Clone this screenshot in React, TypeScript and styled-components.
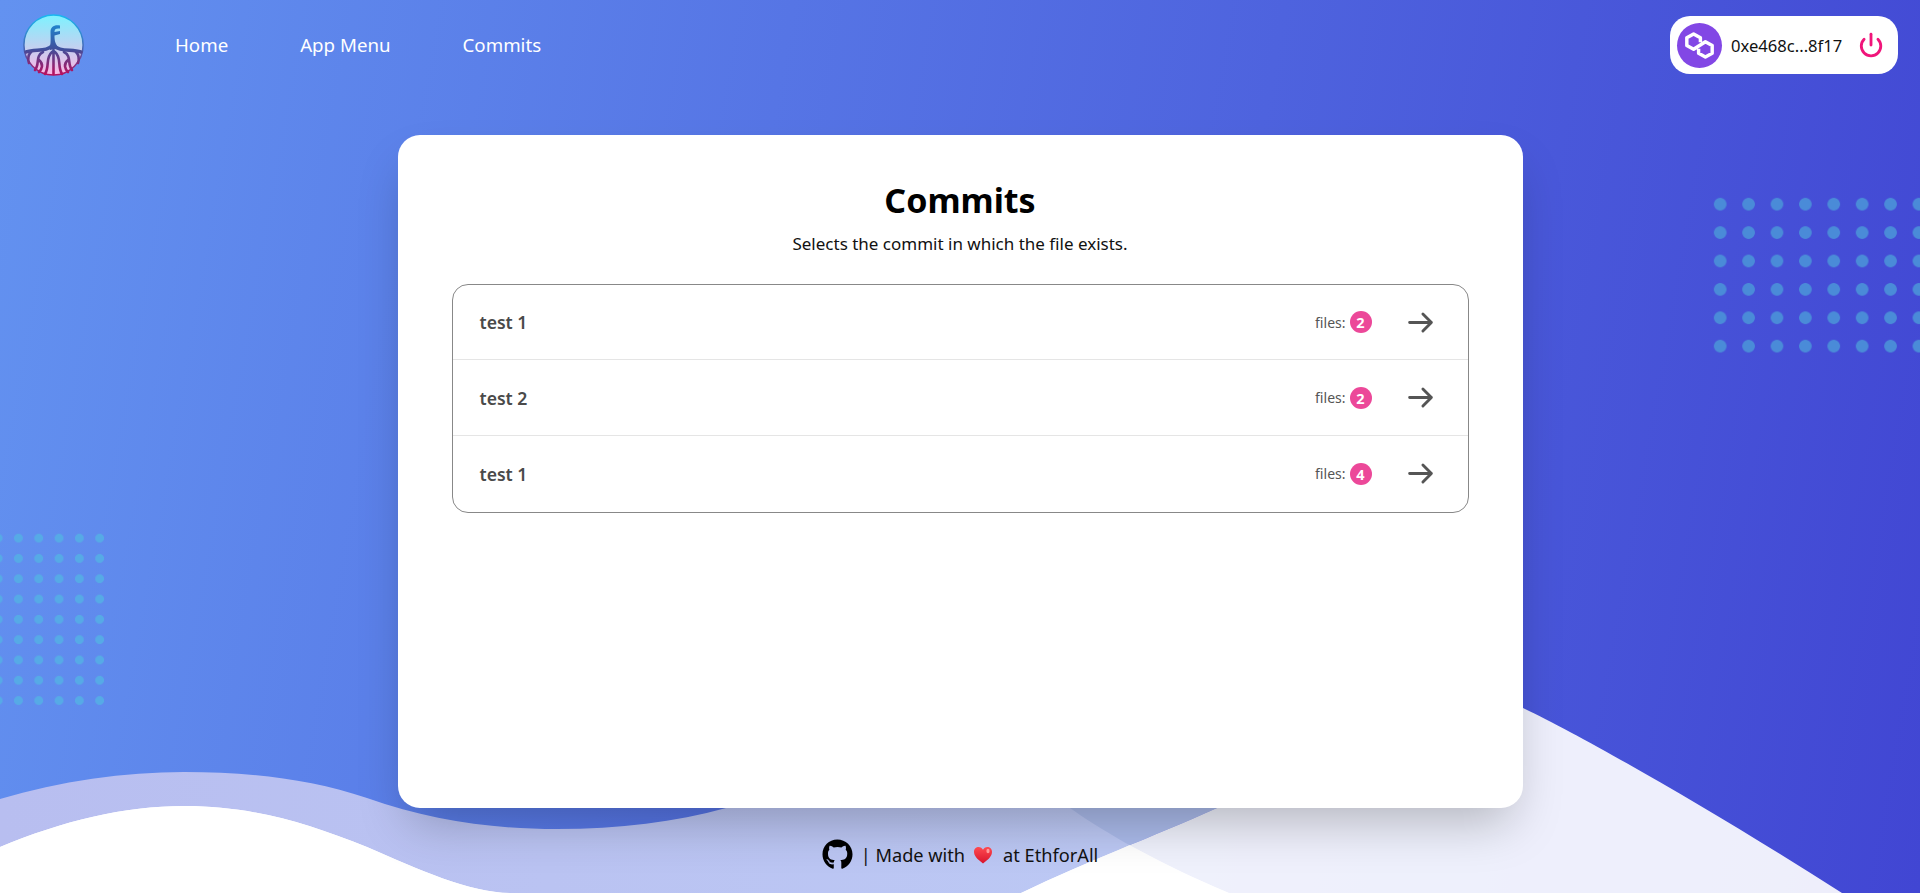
import React from 'react';
import styled, { createGlobalStyle } from 'styled-components';
import { Power } from 'lucide-react';
import { FaGithub } from 'react-icons/fa';

const GlobalStyle = createGlobalStyle`
  html, body {
    margin: 0;
    padding: 0;
    font-family: "Noto Sans", "Open Sans", sans-serif;
  }
  * { box-sizing: border-box; }
`;

const Page = styled.div`
  position: relative;
  height: 893px;
  overflow: hidden;
  display: flex;
  flex-direction: column;
  background: linear-gradient(100deg, #6392f0 0%, #4146d3 100%);
`;

const Waves = styled.svg`
  position: absolute;
  inset: 0;
  width: 100%;
  height: 100%;
`;

const Dots = styled.div<{ $step: number; $dot: number; $color: string; $side: 'left' | 'right' }>`
  position: absolute;
  background-image: radial-gradient(circle, ${(p) => p.$color} ${(p) => p.$dot / 2 - 0.5}px, transparent ${(p) => p.$dot / 2 + 0.3}px);
  background-size: ${(p) => p.$step}px ${(p) => p.$step}px;
  ${(p) =>
    p.$side === 'right'
      ? 'top: 189.5px; left: 1705.5px; width: 215px; height: 170.4px;'
      : 'top: 527.8px; left: -12.2px; width: 121.8px; height: 182.7px;'}
`;

const Nav = styled.nav`
  position: relative;
  height: 90px;
  flex-shrink: 0;
  padding: 14px 22px 0 23px;
  display: flex;
  align-items: flex-start;
`;

const Logo = styled.svg`
  width: 61px;
  height: 62px;
  flex-shrink: 0;
`;

const NavLinks = styled.div`
  display: flex;
  gap: 72px;
  margin-left: 91px;
  margin-top: 17px;
`;

const NavLink = styled.a`
  color: #fff;
  font-size: 18.7px;
  line-height: 28px;
`;

const Wallet = styled.div`
  margin-left: auto;
  margin-top: 2px;
  width: 228px;
  height: 58px;
  background: #fff;
  border-radius: 20px;
  display: flex;
  align-items: center;
  padding: 0 14px 0 7px;
  color: #111;
  font-size: 16.6px;
`;

const ChainBadge = styled.div`
  width: 45px;
  height: 45px;
  border-radius: 50%;
  background: #8247e5;
  flex-shrink: 0;
  margin-right: 9px;
  display: flex;
  align-items: center;
  justify-content: center;
`;

const PowerButton = styled.span`
  margin-left: auto;
  display: flex;
  color: #f0157a;
`;

const Main = styled.main`
  position: relative;
  flex: 1;
  display: flex;
  flex-direction: column;
  align-items: center;
  padding-top: 45px;
`;

const Card = styled.section`
  width: 1125px;
  height: 673px;
  background: #fff;
  border-radius: 22px;
  box-shadow: 0 25px 50px -12px rgba(0, 0, 0, 0.25);
  padding: 45px 54px 0;
  flex-shrink: 0;
`;

const Title = styled.h1`
  margin: 0;
  text-align: center;
  font-size: 34px;
  line-height: 40px;
  font-weight: 700;
  color: #000;
`;

const Subtitle = styled.p`
  margin: 11px 0 28px;
  text-align: center;
  font-size: 17px;
  line-height: 25px;
  color: #111;
`;

const List = styled.ul`
  list-style: none;
  margin: 0;
  padding: 0;
  border: 1px solid #888;
  border-radius: 16px;
`;

const Row = styled.li`
  height: 76px;
  padding: 0 33px 0 27px;
  display: flex;
  align-items: center;
  color: #4a4a4a;
  &:first-child {
    height: 74px;
  }
  &:last-child {
    height: 77px;
    padding-bottom: 1px;
  }
  & + & {
    border-top: 1px solid #e5e5e5;
  }
`;

const RowName = styled.span`
  font-size: 17.6px;
  font-weight: 600;
  flex: 1;
`;

const FilesLabel = styled.span`
  font-size: 14px;
  color: #555;
  margin-right: 4px;
`;

const CountBadge = styled.span`
  width: 22px;
  height: 22px;
  border-radius: 50%;
  background: #ec4899;
  color: #fff;
  font-size: 14.5px;
  font-weight: 700;
  display: flex;
  align-items: center;
  justify-content: center;
  margin-right: 34px;
`;

const ArrowIcon = styled.svg`
  width: 29px;
  height: 29px;
  fill: none;
  stroke: #555;
  stroke-width: 2.4;
  stroke-linecap: round;
  stroke-linejoin: round;
`;

const Footer = styled.footer`
  position: relative;
  flex: 1;
  display: flex;
  align-items: center;
  justify-content: center;
  color: #111;
  font-size: 18.2px;
  padding-top: 8px;
`;

const GithubLink = styled.a`
  display: flex;
  color: #000;
  margin-right: 8px;
`;

const HeartIcon = styled.svg`
  width: 20px;
  height: 20px;
  margin: 0 10px 0 8px;
`;

const commits = [
  { name: 'test 1', files: 2 },
  { name: 'test 2', files: 2 },
  { name: 'test 1', files: 4 },
];

const upperWave =
  'M0 799 C60 781 125 772 184 772 C250 772 310 779 367 798 C430 820 490 829 557 829 C620 829 675 822 726 808 C800 785 860 770 920 770 C970 770 1020 775 1070 808 C1095 826 1150 860 1229 893 L1229 940 L0 940 Z';
const lowerWave =
  'M0 847 C62 821 125 806 184 806 C250 806 305 822 367 847 C420 870 470 893 511 893 L560 930 L980 930 L1021 893 C1090 860 1150 838 1217 808 C1320 760 1420 650 1523 708 C1590 740 1720 815 1842 893 L1900 940 L0 940 Z';
const overlapWedge = 'M1040 790 L1240 790 L1217 808 C1150 838 1090 860 1021 893 L1040 893 Z';

const App: React.FC = () => {
  return (
    <Page>
      <GlobalStyle />
      <Waves viewBox="0 0 1920 893" preserveAspectRatio="none">
        <defs>
          <clipPath id="upperClip">
            <path d={upperWave} />
          </clipPath>
          <linearGradient id="upperFill" gradientUnits="userSpaceOnUse" x1="0" y1="0" x2="1100" y2="0">
            <stop offset="0" stopColor="#b8bef0" />
            <stop offset="1" stopColor="#bcc8f4" />
          </linearGradient>
        </defs>
        <path fill="#aabaea" d={overlapWedge} />
        <path fill="url(#upperFill)" d={upperWave} />
        <path fill="#fff" fillOpacity="0.91" d={lowerWave} />
        <path fill="#fff" clipPath="url(#upperClip)" d={lowerWave} />
      </Waves>
      <Dots $side="right" $step={28.4} $dot={12.7} $color="#4a8bd8" />
      <Dots $side="left" $step={20.3} $dot={9} $color="#56aae6" />

      <Nav>
        <Logo viewBox="0 0 61 62">
          <defs>
            <linearGradient id="logoFill" x1="0" y1="0" x2="0" y2="1">
              <stop offset="0" stopColor="#7df2ff" />
              <stop offset="1" stopColor="#fdb4e4" />
            </linearGradient>
            <linearGradient id="logoRing" x1="0" y1="0" x2="0" y2="1">
              <stop offset="0" stopColor="#18b8f0" />
              <stop offset="0.6" stopColor="#4a5fb0" />
              <stop offset="1" stopColor="#b8105e" />
            </linearGradient>
            <linearGradient id="logoTree" gradientUnits="userSpaceOnUse" x1="0" y1="10" x2="0" y2="60">
              <stop offset="0" stopColor="#1f86cf" />
              <stop offset="0.5" stopColor="#3f4f9c" />
              <stop offset="1" stopColor="#b5105f" />
            </linearGradient>
          </defs>
          <ellipse cx="30.5" cy="31" rx="29.6" ry="30" fill="url(#logoFill)" stroke="url(#logoRing)" strokeWidth="1.5" />
          <path fill="url(#logoTree)" d="M27 33 C28 27 27.5 23 27.5 18 C27.5 13 31 10.5 37 11.5 L37 14.5 C33 14 31.5 15 31.5 18 L37 17 L37 20 L31.5 21.5 C31.5 26 32 30 36 34 L27 36 Z" />
          <g fill="none" stroke="url(#logoTree)" strokeLinecap="round">
            <path strokeWidth="3.5" d="M3 38 C13 35 24 38 30 31 C36 38 48 35 58 38" />
            <path strokeWidth="2.6" d="M30.5 36 V60 M29 38 C22 44 27 52 22 60 M32 38 C39 44 34 52 39 60" />
            <path strokeWidth="2.6" d="M20 38 C12 42 17 50 12 56 M41 38 C49 42 44 50 49 56" />
            <path strokeWidth="2.6" d="M8 38 C4 42 5 46 6 49 M53 38 C57 42 56 46 55 49 M16 46 C21 50 19 55 16 58 M45 46 C40 50 42 55 45 58" />
          </g>
        </Logo>
        <NavLinks>
          <NavLink>Home</NavLink>
          <NavLink>App Menu</NavLink>
          <NavLink>Commits</NavLink>
        </NavLinks>
        <Wallet>
          <ChainBadge>
            <svg width="31" height="29" viewBox="0 0 34 32" fill="none" stroke="#fff" strokeWidth="3.8" strokeLinejoin="round">
              <path d="M18 12.5 V7.5 L10.5 3.3 L3 7.5 V16 L10.5 20.2 L23.5 11.8 L31 16 V24.5 L23.5 28.7 L16 24.5 V19.5" />
            </svg>
          </ChainBadge>
          0xe468c...8f17
          <PowerButton>
            <Power size={26} strokeWidth={2.6} />
          </PowerButton>
        </Wallet>
      </Nav>

      <Main>
        <Card>
          <Title>Commits</Title>
          <Subtitle>Selects the commit in which the file exists.</Subtitle>
          <List>
            {commits.map((commit, i) => (
              <Row key={i}>
                <RowName>{commit.name}</RowName>
                <FilesLabel>files:</FilesLabel>
                <CountBadge>{commit.files}</CountBadge>
                <ArrowIcon viewBox="0 0 24 24">
                  <path d="M14 5l7 7m0 0l-7 7m7-7H3" />
                </ArrowIcon>
              </Row>
            ))}
          </List>
        </Card>
        <Footer>
          <GithubLink>
            <FaGithub size={31} />
          </GithubLink>
          | Made with
          <HeartIcon viewBox="0 0 20 20">
            <defs>
              <linearGradient id="heartFill" x1="0" y1="0" x2="0" y2="1">
                <stop offset="0" stopColor="#ff4a50" />
                <stop offset="1" stopColor="#d8142c" />
              </linearGradient>
            </defs>
            <path fill="url(#heartFill)" d="M10 18.5 C4 14 1 11 1 6.8 C1 3.8 3.2 2 5.6 2 C7.5 2 9.2 3.1 10 4.8 C10.8 3.1 12.5 2 14.4 2 C16.8 2 19 3.8 19 6.8 C19 11 16 14 10 18.5 Z" />
            <ellipse cx="15" cy="6" rx="1.6" ry="2.2" fill="#ff9a9a" />
          </HeartIcon>
          at EthforAll
        </Footer>
      </Main>
    </Page>
  );
};

export default App;
